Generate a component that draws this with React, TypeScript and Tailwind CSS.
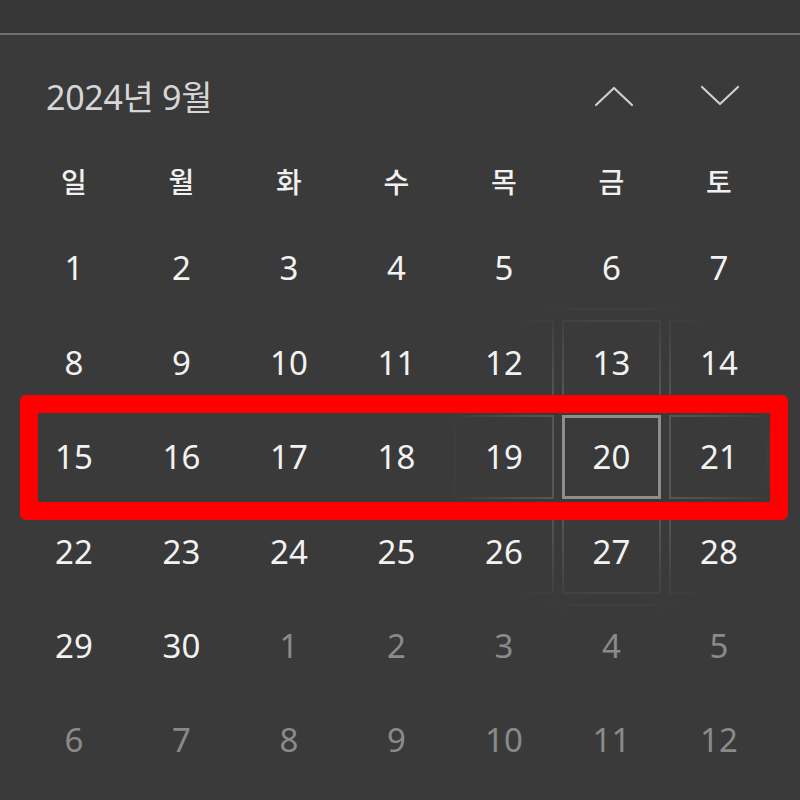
const DAY_NAMES = ["일", "월", "화", "수", "목", "금", "토"];

type Day = { n: number; current: boolean };

function buildDays(): Day[] {
  const days: Day[] = [];
  for (let i = 1; i <= 30; i++) days.push({ n: i, current: true });
  for (let i = 1; i <= 12; i++) days.push({ n: i, current: false });
  return days;
}

// reveal effect: pointer sits over the 20th
const COL_W = 107.5;
const ROW_H = 94.4;
const INSET_X = 4;
const INSET_Y = 5;
const HOVER = { col: 5, row: 2 };

function revealStyle(col: number, row: number): React.CSSProperties {
  const w = COL_W - INSET_X * 2;
  const h = ROW_H - INSET_Y * 2;
  const cx = (HOVER.col - col) * COL_W + w / 2;
  const cy = (HOVER.row - row) * ROW_H + h / 2;
  return {
    background: `linear-gradient(#3a3a3a, #3a3a3a) padding-box, radial-gradient(circle at ${cx}px ${cy}px, rgba(255,255,255,0.22) 0px, rgba(255,255,255,0.11) 100px, rgba(255,255,255,0) 165px) border-box`,
  };
}

function Chevron({ up }: { up?: boolean }) {
  return (
    <svg width="40" height="22" viewBox="0 0 40 22" fill="none" stroke="#cfcfcf" strokeWidth={2.2} strokeLinecap="round" strokeLinejoin="round">
      {up ? <path d="M2 20L20 3l18 17" /> : <path d="M2 2l18 17L38 2" />}
    </svg>
  );
}

export default function App() {
  const days = buildDays();

  return (
    <div
      className="relative w-[800px] h-[800px] overflow-hidden bg-[#3a3a3a] text-[#f2f2f2]"
      style={{ fontFamily: '"Noto Sans", "Noto Sans CJK KR", sans-serif' }}
    >
      <div className="h-[33px] bg-[#363636]" />
      <div className="h-[2px] bg-[#717171]" />

      <div className="h-[124px] flex items-center justify-between pl-[46px] pr-[60px]">
        <span className="text-[34px] text-[#d6d6d6] tracking-[-0.3px]">2024년 9월</span>
        <div className="flex items-center gap-[66px] pb-[2px]">
          <Chevron up />
          <Chevron />
        </div>
      </div>

      <div className="grid grid-cols-[repeat(7,107.5px)] ml-[20.25px] h-[44px] items-center">
        {DAY_NAMES.map((d) => (
          <div key={d} className="text-center text-[28px] font-medium text-[#f0f0f0]" style={{ fontFamily: '"Noto Sans CJK KR", sans-serif' }}>
            {d}
          </div>
        ))}
      </div>

      <div className="grid grid-cols-[repeat(7,107.5px)] auto-rows-[94.4px] ml-[20.25px] mt-[18px]">
        {days.map((d, i) => {
          const col = i % 7;
          const row = Math.floor(i / 7);
          const hovered = col === HOVER.col && row === HOVER.row;
          return (
            <div key={i} className="px-[4px] py-[5px]">
              {hovered ? (
                <div className="h-full flex items-center justify-center border-[3px] border-[#8d8d8d] bg-[#393939] text-[33px]">
                  {d.n}
                </div>
              ) : (
                <div
                  className={`h-full flex items-center justify-center border-2 border-transparent text-[33px] ${d.current ? "text-[#f2f2f2]" : "text-[#8a8a8a]"}`}
                  style={revealStyle(col, row)}
                >
                  {d.n}
                </div>
              )}
            </div>
          );
        })}
      </div>

      <div className="absolute left-[20px] top-[395px] w-[768px] h-[125px] border-[18px] border-[#ff0000] rounded-[6px]" />
    </div>
  );
}
